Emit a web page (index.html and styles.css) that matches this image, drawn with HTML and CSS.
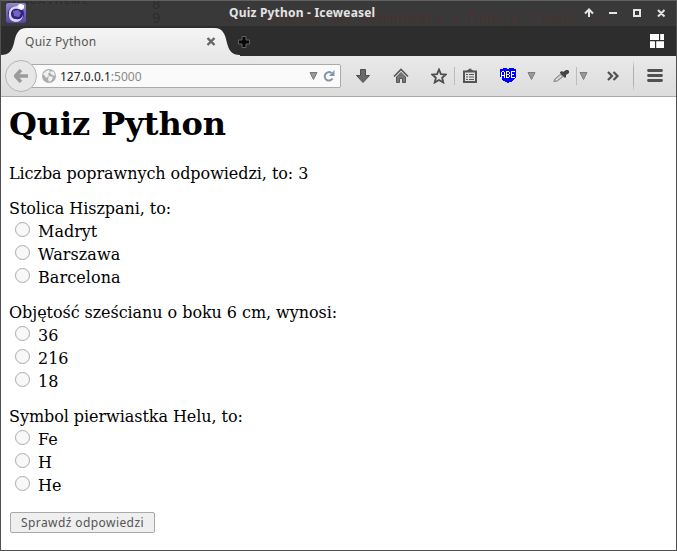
FILE: index.html
```html
<!DOCTYPE html>
<html lang="pl">
<head>
<meta charset="utf-8">
<title>Quiz Python</title>
<link rel="stylesheet" href="styles.css">
</head>
<body>
<div class="window">
  <header class="titlebar">
    <div class="backdrop"><span class="ghost-file">index.html</span><span class="ghost-lines">8<br>9</span><span class="ghost-code">&lt;!-- wyświetlamy komunikaty z funkcji flash --&gt;</span></div>
    <svg class="app-icon" viewBox="0 0 20 20"><defs><linearGradient id="app" x2="0" y2="1"><stop stop-color="#9189c5"/><stop offset="1" stop-color="#5544a8"/></linearGradient></defs><rect width="20" height="20" rx="2" fill="url(#app)"/><circle cx="10" cy="11" r="8" fill="#312480"/><path d="M3 10c0-4 3-7 8-7l2-2h2l1 1h2v3l-2 2-4-1C7 5 5 8 5 11c0 3 2 5 5 5 4 1 6-1 7-4 0 4-3 7-7 7-5 0-8-4-7-9z" fill="#d9d5f2"/><path d="M7 8l5-1 3 3-2 4-5-1z" fill="#7266be"/><path d="M12 4l2-3 4 1v3l-3 2z" fill="#fff"/></svg>
    <div class="window-title">Quiz Python - Iceweasel</div>
    <svg class="controls" viewBox="0 0 82 12" fill="none" stroke="#e5e5e5" stroke-width="2"><path d="M5 2v8M1 6.500l4-4 4 4M25 6h8M50 3h6v6h-6zM74 3l6.500 6.500M80.500 3L74 9.500"/></svg>
  </header>
  <nav class="tabs">
    <svg class="tab-shape" viewBox="0 0 239 30"><defs><linearGradient id="tab" x2="0" y2="1"><stop stop-color="#f5f5f5"/><stop offset="1" stop-color="#e9e9e9"/></linearGradient></defs><path d="M0 30v-1c8 0 11-4 13-12C15 8 17 2 26 2h187c9 0 11 6 13 15 2 8 5 12 13 12v1z" fill="url(#tab)"/></svg>
    <span class="tab-title">Quiz Python</span>
    <svg class="tab-close" viewBox="0 0 10 10"><path d="M1.500 2l7 7M8.500 2l-7 7" stroke="#666" stroke-width="2.400"/></svg>
    <svg class="new-tab" viewBox="0 0 12 12"><path d="M4 .5h4V4h3.500v4H8v3.500H4V8H.5V4H4z" fill="#080808" stroke="#626262"/></svg>
    <svg class="groups" viewBox="0 0 14 14" fill="#fff"><path d="M0 0h9v6H0zM10.200 0H14v6h-3.800zM0 7.200h5V14H0zM6.200 7.200H14V14H6.200z"/></svg>
  </nav>
  <div class="toolbar">
    <div class="back"><svg width="14" height="14" viewBox="0 0 14 14"><path d="M7 1L1.500 7 7 13M2 7h12" fill="none" stroke="#9b9b9b" stroke-width="3.400"/></svg></div>
    <div class="address">
      <svg class="globe" viewBox="0 0 14 14"><circle cx="7" cy="7" r="7" fill="#acacac"/><path d="M1 5l3-3 3-1 1 2-2 2 1 2-3 2-1-2zM9 2l3 1 1 4-3-1-2-2zM7 7l4 1-1 3-3 2-1-3z" fill="#f0f0f0"/></svg>
      <span class="url">127.0.0.1<span>:5000</span></span>
      <svg class="drop" viewBox="0 0 9 8"><path d="M1 .5h7L4.500 7.500z" fill="#999" stroke="#777"/></svg>
      <svg class="reload" viewBox="0 0 12 12"><path d="M8.500 3A4.200 4.200 0 1 0 9.500 8.500" fill="none" stroke="#8497a9" stroke-width="2"/><path d="M11.500 0v6H6z" fill="#8497a9"/></svg>
    </div>
    <svg class="icon download" viewBox="0 0 16 16"><path d="M5.500 1.500h5v6h4L8 14.500 1.500 7.500h4z" fill="#696969" stroke="#4d4d4d"/></svg>
    <svg class="icon gap-l" viewBox="0 0 16 16"><path d="M3.500 9L8 4.500 12.500 9v5.500h-3v-4h-3v4h-3z" fill="#777" stroke="#555"/><path d="M1 8.500l7-7 7 7" fill="none" stroke="#555" stroke-width="1.600"/></svg>
    <svg class="icon gap-l" viewBox="0 0 16 16"><path d="M8 1.500l1.900 4.600 4.900.4-3.700 3.200 1.200 4.800L8 12l-4.300 2.500 1.200-4.800L1.200 6.500l4.900-.4z" fill="none" stroke="#4e4e4e" stroke-width="1.800"/></svg>
    <i class="sep sep-star"></i>
    <svg class="icon gap-s" viewBox="0 0 16 16"><path d="M2 3.500h12v10.500H2z" fill="none" stroke="#555" stroke-width="2"/><path d="M4.500 3l1-1h1V.8h3V2h1l1 1v1h-7z" fill="#555"/><path d="M4 6.500h2m1 0h5M4 9h2m1 0h5M4 11.500h2m1 0h5" stroke="#555"/></svg>
    <svg class="icon gap-l" viewBox="0 0 16 16" shape-rendering="crispEdges"><path d="M0 1h2l1-1h3l2 1 2-1h3l1 1h2v8l-2 2-1 2-3 1-2 1-2-1-3-1-1-2-2-2z" fill="#00f"/><path d="M1 4h1v6H1zM2 3h2v1H2zM4 4h1v6H4zM2 7h2v1H2zM6 3h1v7H6zM7 3h2v1H7zM7 6h2v1H7zM7 9h2v1H7zM9 4h1v2H9zM9 7h1v2H9zM11 3h1v7h-1zM12 3h3v1h-3zM12 6h2v1h-2zM12 9h3v1h-3z" fill="#fff"/></svg>
    <svg class="tri tri-abp" viewBox="0 0 9 8"><path d="M1 .5h7L4.500 7.500z" fill="#999" stroke="#7c7c7c"/></svg>
    <svg class="icon pipette" viewBox="0 0 16 16"><path d="M.8 13.500l1-2.500 6-5 2.500 2.500-6 4.500z" fill="#b8b8b8" stroke="#888"/><path d="M3 12l5-4" stroke="#eee"/><path d="M7 4l2-1 1 1 3-2h2l1 1v2l-3 2v2l-1 1-5-5z" fill="#444"/></svg>
    <i class="sep sep-pipette"></i>
    <svg class="tri tri-pipette" viewBox="0 0 9 8"><path d="M1 .5h7L4.500 7.500z" fill="#999" stroke="#7c7c7c"/></svg>
    <svg class="icon more" viewBox="0 0 16 16"><path d="M3 4l4 4-4 4M8.500 4l4 4-4 4" fill="none" stroke="#505050" stroke-width="2.200"/></svg>
    <i class="sep sep-menu"></i>
    <svg class="icon menu" viewBox="0 0 16 16"><path d="M1.500 2.500h13M1.500 7.500h13M1.500 12.500h13" stroke="#505050" stroke-width="2.800" stroke-linecap="round"/></svg>
  </div>
  <main>
    <h1>Quiz Python</h1>
    <p>Liczba poprawnych odpowiedzi, to: 3</p>
    <form>
      <div class="question"><p>Stolica Hiszpani, to:</p>
        <label><input type="radio" name="q1">Madryt</label><label><input type="radio" name="q1"><span class="wide">Warszawa</span></label><label><input type="radio" name="q1"><span class="wide">Barcelona</span></label></div>
      <div class="question"><p>Objętość sześcianu o boku 6 cm, wynosi:</p>
        <label><input type="radio" name="q2">36</label><label><input type="radio" name="q2">216</label><label><input type="radio" name="q2">18</label></div>
      <div class="question"><p>Symbol pierwiastka Helu, to:</p>
        <label><input type="radio" name="q3">Fe</label><label><input type="radio" name="q3">H</label><label><input type="radio" name="q3">He</label></div>
      <button type="button">Sprawdź odpowiedzi</button>
    </form>
  </main>
</div>
</body>
</html>
```
FILE: styles.css
```css
* { box-sizing: border-box; }
body { margin: 0; overflow: hidden; background: #fff; }
svg { display: block; flex: none; }
.window { width: 677px; height: 551px; border: 1px solid #505050; border-top: 0; display: flex; flex-direction: column; font-family: "Noto Sans", sans-serif; }
.titlebar { height: 26px; flex: none; position: relative; display: flex; align-items: center; background: #393939; border-top: 1px solid #606060; overflow: hidden; }
.backdrop { position: absolute; inset: 0; color: #2c2c2c; font: 14px/14px "Liberation Mono", monospace; white-space: nowrap; }
.backdrop span { position: absolute; }
.ghost-file { left: 3px; top: -8px; }
.ghost-lines { left: 151px; top: -3px; }
.ghost-code { left: 223px; top: 11px; color: #4c3030; font-size: 13.500px; }
.app-icon { width: 20px; height: 20px; margin: -1px 0 0 5px; position: relative; }
.window-title { position: relative; margin: -2px 0 0 203px; width: 150px; color: #e4e4e4; font-weight: bold; font-size: 12px; letter-spacing: .2px; line-height: 18px; white-space: nowrap; }
.controls { position: relative; width: 82px; height: 12px; margin: -1px 0 0 205px; }
.tabs { height: 30px; flex: none; background: #2d2d2d; display: flex; align-items: center; position: relative; }
.tab-shape { position: absolute; left: 0; top: 0; width: 239px; height: 30px; }
.tab-title { position: relative; margin-left: 24px; width: 181px; color: #555; font-size: 12px; letter-spacing: .27px; }
.tab-close { position: relative; width: 10px; height: 10px; }
.new-tab { width: 12px; height: 12px; margin: 2px 0 0 22px; }
.groups { width: 14px; height: 14px; margin-left: 400px; }
.toolbar { height: 41px; flex: none; display: flex; align-items: center; background: linear-gradient(#e9e9e9, #dcdcdc); border-bottom: 1px solid #aaa; }
.back { width: 32px; height: 32px; margin-left: 4px; border: 1px solid #aeb6be; border-radius: 50%; background: #e7e7e7; display: flex; align-items: center; justify-content: center; flex: none; position: relative; z-index: 1; }
.address { width: 310px; height: 24px; margin-left: -6px; border: 1px solid #aaa; border-radius: 0 2px 2px 0; background: #fafafa; display: flex; align-items: center; flex: none; }
.globe { width: 14px; height: 14px; margin-left: 10px; }
.url { width: 253px; padding-left: 4px; font-size: 12px; color: #222; }
.url span { color: #888; }
.drop { width: 9px; height: 8px; }
.reload { width: 12px; height: 12px; margin-left: 5px; }
.icon { width: 16px; height: 16px; }
.download { margin-left: 14px; }
.gap-l { margin-left: 22px; }
.gap-s { margin-left: 7px; }
.sep { width: 1px; height: 18px; background: #b6bdc6; flex: none; }
.sep-star { margin-left: 7px; }
.tri { width: 9px; height: 8px; }
.tri-abp { margin-left: 11px; }
.pipette { margin-left: 17px; }
.sep-pipette { margin-left: 7px; }
.tri-pipette { margin-left: 2px; }
.more { margin-left: 17px; }
.sep-menu { margin-left: 12px; height: 32px; background: linear-gradient(transparent, #a9b2bd 25%, #a9b2bd 75%, transparent); }
.menu { margin-left: 13px; }
main { flex: 1; padding: 8px 8px 0; background: #fff; color: #000; font: 16px/19px "DejaVu Serif", serif; }
h1 { margin: 0 0 21px; font-size: 32px; line-height: 38px; letter-spacing: -.08px; }
p { margin: 0 0 16px; letter-spacing: -.06px; }
.question { margin-bottom: 16px; }
.question p { margin: 0; }
label { display: flex; height: 23px; padding: 4px 0 0 5px; line-height: 19px; }
.wide { letter-spacing: .08px; }
input { appearance: none; width: 15px; height: 15px; margin: 0 8px 0 1px; border: 1px solid #aaa; border-radius: 50%; background: #f8f8f8; }
button { display: block; width: 145px; height: 21px; margin: 17px 0 0 1px; padding: 0; border: 1px solid #aaa; border-radius: 2px; background: #efefef; color: #555; font: 12px/18px "Noto Sans", sans-serif; letter-spacing: .42px; }
```
